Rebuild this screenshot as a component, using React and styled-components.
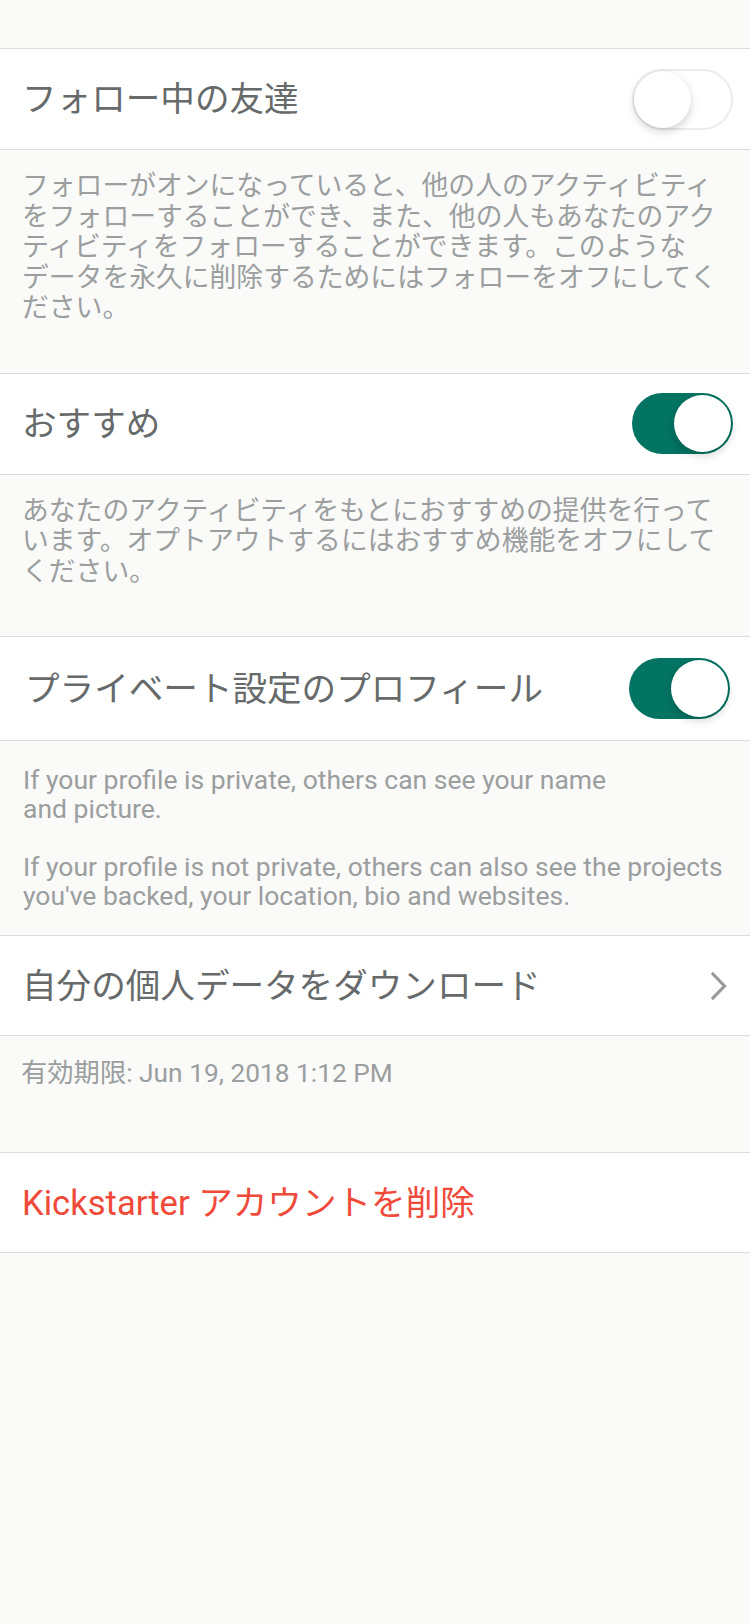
import styled, { createGlobalStyle } from "styled-components";

const GlobalStyle = createGlobalStyle`
  html, body {
    margin: 0;
    padding: 0;
    background: #fafaf9;
  }
  body {
    font-family: Roboto, "Noto Sans CJK JP", sans-serif;
    -webkit-font-smoothing: antialiased;
  }
`;

export default function App() {
  return (
    <Page>
      <GlobalStyle />
      <TopGap />

      <Row $h={102}>
        <Title>フォロー中の友達</Title>
        <Toggle />
      </Row>
      <Note>
        {"フォローがオンになっていると、他の人のアクティビティ\nをフォローすることができ、また、他の人もあなたのアク\nティビティをフォローすることができます。このような\nデータを永久に削除するためにはフォローをオフにしてく\nださい。"}
      </Note>

      <Row $h={102}>
        <Title>おすすめ</Title>
        <Toggle $on />
      </Row>
      <Note>
        {"あなたのアクティビティをもとにおすすめの提供を行って\nいます。オプトアウトするにはおすすめ機能をオフにして\nください。"}
      </Note>

      <Row $h={105} $indent>
        <Title>プライベート設定のプロフィール</Title>
        <Toggle $on />
      </Row>
      <EnglishNote>
        {"If your profile is private, others can see your name\nand picture.\n\nIf your profile is not private, others can also see the projects\nyou've backed, your location, bio and websites."}
      </EnglishNote>

      <Row $h={101}>
        <Title>自分の個人データをダウンロード</Title>
        <Chevron viewBox="0 0 16 28">
          <polyline points="2,2 13.5,14 2,26" />
        </Chevron>
      </Row>
      <DateNote>有効期限: Jun 19, 2018 1:12 PM</DateNote>

      <Row $h={101}>
        <Title $danger>Kickstarter アカウントを削除</Title>
      </Row>
    </Page>
  );
}

const Page = styled.div`
  width: 750px;
  min-height: 1624px;
  background: #fafaf9;
`;

const TopGap = styled.div`
  height: 48px;
`;

const Row = styled.div`
  box-sizing: border-box;
  height: ${(p) => p.$h}px;
  display: flex;
  align-items: center;
  justify-content: space-between;
  padding: ${(p) => (p.$indent ? "0 20px 0 25px" : "0 17px 0 22px")};
  background: #ffffff;
  border-top: 1px solid #dcdcdc;
  border-bottom: 1px solid #dcdcdc;
`;

const Title = styled.div`
  font-size: 34.6px;
  line-height: 40px;
  color: ${(p) => (p.$danger ? "#ef4a3a" : "#666a6a")};
  white-space: nowrap;
`;

const Note = styled.div`
  box-sizing: border-box;
  padding: 21px 6px 49px 22px;
  font-size: 26.8px;
  line-height: 30.5px;
  color: #9b9e9e;
  white-space: pre-line;
`;

const EnglishNote = styled.div`
  box-sizing: border-box;
  padding: 24px 10px 25px 23px;
  font-size: 26.5px;
  line-height: 29px;
  color: #9b9e9e;
  white-space: pre-line;
`;

const DateNote = styled.div`
  box-sizing: border-box;
  padding: 22px 10px 64px 21px;
  font-size: 26.3px;
  line-height: 30px;
  color: #9b9e9e;
`;

const Toggle = styled.div`
  position: relative;
  box-sizing: border-box;
  flex: none;
  width: 101px;
  height: 61px;
  border-radius: 31px;
  background: ${(p) => (p.$on ? "#037362" : "#ffffff")};
  border: ${(p) => (p.$on ? "none" : "2.5px solid #ececec")};

  &::after {
    content: "";
    position: absolute;
    top: ${(p) => (p.$on ? "2px" : "0.5px")};
    left: ${(p) => (p.$on ? "42px" : "0px")};
    width: 57px;
    height: 57px;
    border-radius: 50%;
    background: #ffffff;
    box-shadow: 0 4px 9px rgba(0, 0, 0, 0.16), 0 0 0 0.5px rgba(0, 0, 0, 0.06);
  }
`;

const Chevron = styled.svg`
  flex: none;
  width: 16px;
  height: 28px;
  margin-right: 6px;
  fill: none;
  stroke: #9a9a9a;
  stroke-width: 3.2;
  stroke-linecap: square;
`;
